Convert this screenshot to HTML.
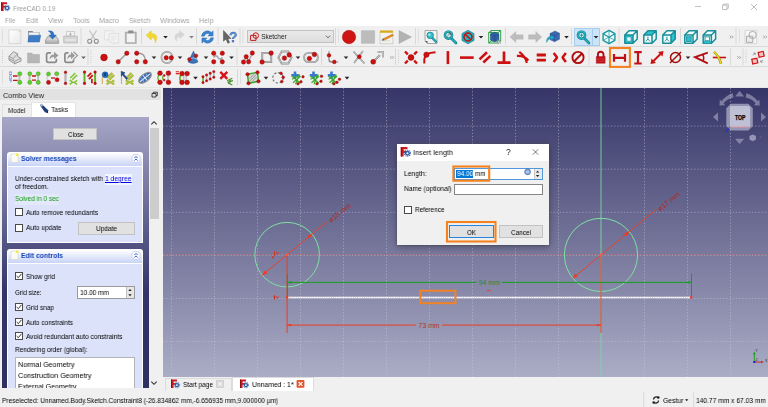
<!DOCTYPE html><html><head><meta charset="utf-8"><title>FreeCAD 0.19</title><style>
*{box-sizing:border-box;margin:0;padding:0}
html,body{width:768px;height:407px;overflow:hidden;background:#f0f0f0;font-family:"Liberation Sans",sans-serif;font-size:7.5px;color:#000}
.abs{position:absolute}
.t{position:absolute;white-space:nowrap;will-change:transform}
#titlebar{left:0;top:0;width:768px;height:26px;background:#fff}
#view{left:163px;top:88px;width:605px;height:288.5px;background:linear-gradient(#353568,#abacc5);overflow:hidden}
.btn{position:absolute;background:#e1e1e1;border:0.8px solid #c2c2c2}
.cb{position:absolute;width:8px;height:8px;background:#fff;border:0.7px solid #4a4a4a}
.grp{position:absolute;left:7px;width:135.5px;border:1px solid #fff;background:#dbe2fa}
.gh{position:absolute;left:7px;width:135.5px;height:14.5px;border:1px solid #fff;border-bottom:none;border-radius:3px 3px 0 0;background:linear-gradient(#fff,#c8d3f6)}
svg{position:absolute;overflow:visible}
</style></head><body>
<div id="titlebar" class="abs"></div>
<svg class="abs" style="left:0;top:0" width="768" height="26" viewBox="0 0 768 26">
<g transform="translate(1.00,2.20) scale(0.870)"><path d="M0 0H7V2.4H3V4H5.6V6.2H3V10H0Z" fill="#cb1a1f"/><path d="M0 0H1.3V10H0Z" fill="#8e1014"/><circle cx="7" cy="6.6" r="2.6" fill="#2f5fa8"/><circle cx="7" cy="6.6" r="3.2" fill="none" stroke="#2f5fa8" stroke-width="1.1" stroke-dasharray="1.1 0.9"/><circle cx="7" cy="6.6" r="1.1" fill="#fff"/></g>
<path d="M695 6.5H701" stroke="#b0b0b0" stroke-width="0.8" fill="none"/>
<path d="M722.5 5.2H727V9.5H722.5ZM723.8 5.2V4H728.3V8.3H727" stroke="#b0b0b0" stroke-width="0.8" fill="none"/>
<path d="M751 4L757 10M757 4L751 10" stroke="#b0b0b0" stroke-width="0.8" fill="none"/>
</svg>
<div class="t" style="left:13.00px;top:2.50px;font-size:8.00px;line-height:11.00px;color:#9c9c9c;transform:scaleX(0.8273);transform-origin:0 50%;">FreeCAD 0.19</div>
<div class="t" style="left:4.70px;top:15.60px;font-size:7.60px;line-height:10.60px;color:#a2a2a2;transform:scaleX(0.8574);transform-origin:0 50%;">File</div>
<div class="t" style="left:25.80px;top:15.60px;font-size:7.60px;line-height:10.60px;color:#a2a2a2;transform:scaleX(0.9163);transform-origin:0 50%;">Edit</div>
<div class="t" style="left:47.50px;top:15.60px;font-size:7.60px;line-height:10.60px;color:#a2a2a2;transform:scaleX(0.9182);transform-origin:0 50%;">View</div>
<div class="t" style="left:72.80px;top:15.60px;font-size:7.60px;line-height:10.60px;color:#a2a2a2;transform:scaleX(0.9300);transform-origin:0 50%;">Tools</div>
<div class="t" style="left:99.30px;top:15.60px;font-size:7.60px;line-height:10.60px;color:#a2a2a2;transform:scaleX(0.9472);transform-origin:0 50%;">Macro</div>
<div class="t" style="left:128.80px;top:15.60px;font-size:7.60px;line-height:10.60px;color:#a2a2a2;transform:scaleX(0.9254);transform-origin:0 50%;">Sketch</div>
<div class="t" style="left:159.50px;top:15.60px;font-size:7.60px;line-height:10.60px;color:#a2a2a2;transform:scaleX(0.9569);transform-origin:0 50%;">Windows</div>
<div class="t" style="left:198.50px;top:15.60px;font-size:7.60px;line-height:10.60px;color:#a2a2a2;transform:scaleX(0.9277);transform-origin:0 50%;">Help</div>
<div class="abs" style="left:0;top:26px;width:768px;height:62px;background:#f0f0f0"></div>
<div class="abs" style="left:0;top:45.6px;width:768px;height:0.8px;background:#dadada"></div>
<div class="abs" style="left:0;top:66.1px;width:768px;height:0.8px;background:#dadada"></div>
<div class="abs" style="left:0;top:87.2px;width:768px;height:0.8px;background:#e6e6e6"></div>
<div class="abs" style="left:247px;top:30.3px;width:86.5px;height:12.6px;background:linear-gradient(#e9e9e9,#dedede);border:0.8px solid #c2c2c2"></div>
<div class="abs" style="left:574px;top:28px;width:25.5px;height:17.5px;background:#cce4f7;border:0.8px solid #a6cdee"></div>
<div class="abs" style="left:591.5px;top:28px;width:0.8px;height:17.5px;background:#a6cdee"></div>
<svg class="abs" style="left:0;top:0" width="768" height="88" viewBox="0 0 768 88">
<path d="M81.0 28.0V44.5" stroke="#d2d2d2" stroke-width="0.8"/>
<path d="M141.5 28.0V44.5" stroke="#d2d2d2" stroke-width="0.8"/>
<path d="M196.5 28.0V44.5" stroke="#d2d2d2" stroke-width="0.8"/>
<path d="M218.0 28.0V44.5" stroke="#d2d2d2" stroke-width="0.8"/>
<path d="M240.0 28.0V44.5" stroke="#d2d2d2" stroke-width="0.8"/>
<path d="M335.5 28.0V44.5" stroke="#d2d2d2" stroke-width="0.8"/>
<path d="M415.5 28.0V44.5" stroke="#d2d2d2" stroke-width="0.8"/>
<path d="M505.5 28.0V44.5" stroke="#d2d2d2" stroke-width="0.8"/>
<path d="M571.5 28.0V44.5" stroke="#d2d2d2" stroke-width="0.8"/>
<path d="M619.0 28.0V44.5" stroke="#d2d2d2" stroke-width="0.8"/>
<path d="M680.5 28.0V44.5" stroke="#d2d2d2" stroke-width="0.8"/>
<path d="M736.0 28.0V44.5" stroke="#d2d2d2" stroke-width="0.8"/>
<path d="M2.5 29.5V43.5" stroke="#b8b8b8" stroke-width="0.8" stroke-dasharray="0.8 1.2"/>
<path d="M243.0 29.5V43.5" stroke="#b8b8b8" stroke-width="0.8" stroke-dasharray="0.8 1.2"/>
<path d="M338.5 29.5V43.5" stroke="#b8b8b8" stroke-width="0.8" stroke-dasharray="0.8 1.2"/>
<path d="M418.5 29.5V43.5" stroke="#b8b8b8" stroke-width="0.8" stroke-dasharray="0.8 1.2"/>
<path d="M739.5 29.5V43.5" stroke="#b8b8b8" stroke-width="0.8" stroke-dasharray="0.8 1.2"/>
<path d="M88.0 48.5V65.0" stroke="#d2d2d2" stroke-width="0.8"/>
<path d="M237.0 48.5V65.0" stroke="#d2d2d2" stroke-width="0.8"/>
<path d="M321.5 48.5V65.0" stroke="#d2d2d2" stroke-width="0.8"/>
<path d="M395.5 48.5V65.0" stroke="#d2d2d2" stroke-width="0.8"/>
<path d="M589.0 48.5V65.0" stroke="#d2d2d2" stroke-width="0.8"/>
<path d="M730.5 48.5V65.0" stroke="#d2d2d2" stroke-width="0.8"/>
<path d="M743.0 48.5V65.0" stroke="#d2d2d2" stroke-width="0.8"/>
<path d="M2.5 50.0V64.0" stroke="#b8b8b8" stroke-width="0.8" stroke-dasharray="0.8 1.2"/>
<path d="M91.0 50.0V64.0" stroke="#b8b8b8" stroke-width="0.8" stroke-dasharray="0.8 1.2"/>
<path d="M398.5 50.0V64.0" stroke="#b8b8b8" stroke-width="0.8" stroke-dasharray="0.8 1.2"/>
<path d="M746.0 50.0V64.0" stroke="#b8b8b8" stroke-width="0.8" stroke-dasharray="0.8 1.2"/>
<path d="M237.5 69.0V85.5" stroke="#d2d2d2" stroke-width="0.8"/>
<path d="M2.5 70.5V84.5" stroke="#b8b8b8" stroke-width="0.8" stroke-dasharray="0.8 1.2"/>
<path d="M240.5 70.5V84.5" stroke="#b8b8b8" stroke-width="0.8" stroke-dasharray="0.8 1.2"/>
<path d="M163.2 36.0h4.6l-2.3 2.6Z" fill="#222"/>
<path d="M478.7 36.0h4.6l-2.3 2.6Z" fill="#222"/>
<path d="M564.2 36.0h4.6l-2.3 2.6Z" fill="#222"/>
<path d="M593.7 36.0h4.6l-2.3 2.6Z" fill="#222"/>
<path d="M189.2 36.0h4.6l-2.3 2.6Z" fill="#808088"/>
<path d="M151.7 56.5h4.6l-2.3 2.6Z" fill="#222"/>
<path d="M177.7 56.5h4.6l-2.3 2.6Z" fill="#222"/>
<path d="M203.7 56.5h4.6l-2.3 2.6Z" fill="#222"/>
<path d="M229.2 56.5h4.6l-2.3 2.6Z" fill="#222"/>
<path d="M295.7 56.5h4.6l-2.3 2.6Z" fill="#222"/>
<path d="M343.7 56.5h4.6l-2.3 2.6Z" fill="#222"/>
<path d="M685.7 56.5h4.6l-2.3 2.6Z" fill="#222"/>
<path d="M81.2 56.5h4.6l-2.3 2.6Z" fill="#666"/>
<path d="M193.2 76.8h4.6l-2.3 2.6Z" fill="#222"/>
<path d="M263.7 76.8h4.6l-2.3 2.6Z" fill="#222"/>
<path d="M344.7 76.8h4.6l-2.3 2.6Z" fill="#222"/>
<path d="M729.8 35.6l1.3 1.4l-1.3 1.4M731.9 35.6l1.3 1.4l-1.3 1.4" stroke="#777" stroke-width="0.6" fill="none"/>
<path d="M763.3 35.6l1.3 1.4l-1.3 1.4M765.4 35.6l1.3 1.4l-1.3 1.4" stroke="#777" stroke-width="0.6" fill="none"/>
<path d="M390.3 56.1l1.3 1.4l-1.3 1.4M392.4 56.1l1.3 1.4l-1.3 1.4" stroke="#777" stroke-width="0.6" fill="none"/>
<path d="M737.3 56.1l1.3 1.4l-1.3 1.4M739.4 56.1l1.3 1.4l-1.3 1.4" stroke="#777" stroke-width="0.6" fill="none"/>
<path d="M250.6 35.4H256V40.4H250.6Z" fill="none" stroke="#c41a1a" stroke-width="1"/><circle cx="255.8" cy="35.6" r="2.8" fill="none" stroke="#c41a1a" stroke-width="1"/>
<path d="M325.9 35.7L328 37.8L330.1 35.7" stroke="#444" stroke-width="0.8" fill="none"/>
<text x="261.2" y="39.2" font-size="7.5" fill="#222" font-family="Liberation Sans, sans-serif" textLength="25.5" lengthAdjust="spacingAndGlyphs">Sketcher</text>
<g transform="translate(15.50,37.00)"><defs><linearGradient id="gnew" x1="0" y1="0" x2="1" y2="1"><stop offset="0" stop-color="#ffffff"/><stop offset="1" stop-color="#e9e9e9"/></linearGradient></defs><path d="M-6.6 -7H5.4V6.6H-6.6Z" fill="url(#gnew)" stroke="#cfcfcf" stroke-width="0.7" /><path d="M3 -7H5.4V-4.6H3Z" fill="#dcdcdc" /></g>
<g transform="translate(34.00,36.10)"><path d="M-6 -5H-1.5L-.5 -3.8H5.5V5.5H-6Z" fill="#7d8a9c" /><path d="M-5.2 -3.6H4.8V1H-5.2Z" fill="#f2f2f2" /><path d="M-4.8 -.8H6.8L5.4 6H-6.2Z" fill="#3d7dc8" stroke="#2a5fa0" stroke-width="0.4" /></g>
<g transform="translate(52.00,36.40)"><path d="M-4.5 0.3H4.5L6.6 4V7H-6.6V4Z" fill="#d2d2d2" stroke="#7c7c7c" stroke-width="0.6" /><path d="M-6.2 4.2H6.2V6.6H-6.2Z" fill="#a8a8a8" /><path d="M-5 5.4H5" fill="none" stroke="#e6e6e6" stroke-width="0.5" /><path d="M-3.8 -5.5Q1.8 -6.2 2 -1.5H4.4L.6 2.8L-3.2 -1.5H-.8Q-.8 -4 -3.8 -5.5Z" fill="#2f73c4" stroke="#1d4f94" stroke-width="0.3" /></g>
<g transform="translate(70.50,37.00)"><path d="M-4 -5.5H4V-1H-4Z" fill="#f4f4f4" stroke="#a8a8a8" stroke-width="0.5" /><path d="M-6.8 -0.8H6.8V6H-6.8Z" fill="#d6d6d6" stroke="#9c9c9c" stroke-width="0.5" /><path d="M-5 3H5" fill="none" stroke="#f0f0f0" stroke-width="1" /><path d="M0 -4.6V-2M-1.3 -3.2L0 -1.9L1.3 -3.2" fill="none" stroke="#888" stroke-width="0.6" /></g>
<g transform="translate(93.00,37.00)"><path d="M-3.5 -6.5L1.8 2.2M3.5 -6.5L-1.8 2.2" fill="none" stroke="#c4c4c4" stroke-width="1.3" /><circle cx="-3.3" cy="4.3" r="2" fill="none" stroke="#8e8e8e" stroke-width="1.1"/><circle cx="3.3" cy="4.3" r="2" fill="none" stroke="#8e8e8e" stroke-width="1.1"/></g>
<g transform="translate(111.00,37.00)"><path d="M-6.4 -6.4H2.6V2.8H-6.4Z" fill="#f3f3f3" stroke="#d8d8d8" stroke-width="0.6" /><path d="M-2 -3.4H7.6V6H1L-2 3.4Z" fill="#f3f3f3" stroke="#d2d2d2" stroke-width="0.6" /><path d="M0 -.6H5.6M0 1.2H5.6M0 3H4" fill="none" stroke="#dcdcdc" stroke-width="0.6" /></g>
<g transform="translate(130.80,37.00)"><path d="M-5.5 -5H5.5V6.5H-5.5Z" fill="#b4b4b4" stroke="#9a9a9a" stroke-width="0.5" /><path d="M-4 -3.5H4V5.2H-4Z" fill="#f4f4f4" /><path d="M-2.5 -6.5H2.5V-3.8H-2.5Z" fill="#8c8c8c" /></g>
<g transform="translate(152.20,37.00)"><path d="M-6 -1.8L-1 -6.2V-3.6C4.5 -3.6 6 .5 3 5.8C3 2 1.5 .2 -1 .4V3Z" fill="#f2d82c" stroke="#d8bc18" stroke-width="0.4" /></g>
<g transform="translate(179.00,36.10)"><g transform="scale(0.88)"><path d="M6 -1.8L1 -6.2V-3.6C-4.5 -3.6 -6 .5 -3 5.8C-3 2 -1.5 .2 1 .4V3Z" fill="#d6d6d6" stroke="#c8c8c8" stroke-width="0.4" /></g></g>
<g transform="translate(207.50,37.00)"><path d="M-6 -.8A6 6 0 0 1 4 -4.6L5.6 -6.2V-1H.4L2.2 -2.8A3.4 3.4 0 0 0 -3.2 -.8ZM6 .8A6 6 0 0 1 -4 4.6L-5.6 6.2V1H-.4L-2.2 2.8A3.4 3.4 0 0 0 3.2 .8Z" fill="#3b82d0" stroke="#245fa8" stroke-width="0.4" /></g>
<g transform="translate(229.00,37.00)"><path d="M-5.5 -6.5V4.2L-3 2L-1.2 6.2L.6 5.4L-1.2 1.5H2Z" fill="#666" stroke="#333" stroke-width="0.4" /><text x="0" y="4.6" font-size="14" font-weight="bold" fill="#5a90d0" stroke="#2a5a9c" stroke-width="0.3" font-family="Liberation Sans, sans-serif">?</text></g>
<g transform="translate(349.00,37.00)"><circle cx="0" cy="0" r="6.7" fill="#d01414" stroke="#a80c0c" stroke-width="0.5"/></g>
<g transform="translate(368.00,37.00)"><path d="M-6.7 -6.4H6.7V6.4H-6.7Z" fill="#bcbcbc" stroke="#adadad" stroke-width="0.4" /></g>
<g transform="translate(386.70,37.00)"><g transform="scale(1.12)"><path d="M-6 -5H5.5V6H-6Z" fill="#f2f2ee" stroke="#b8b8b0" stroke-width="0.5" /><path d="M-6 -5.8H5.5V-3.8H-6Z" fill="#d8a818" /><path d="M-4.5 1.5H1M-4.5 3.5H3" fill="none" stroke="#c4c4c4" stroke-width="0.5" /><path d="M-3.2 1.6L5.2 -2.6L6 -1.2L-2.4 3Z" fill="#e48a2a" stroke="#b86010" stroke-width="0.3" /><path d="M-3.2 1.6L-4.6 3.2L-2.4 3Z" fill="#333" /></g></g>
<g transform="translate(405.00,37.00)"><path d="M-6 -6.5L6.5 0L-6 6.5Z" fill="#b2b2b2" stroke="#a0a0a0" stroke-width="0.4" /></g>
<g transform="translate(431.00,37.00)"><path d="M-6 -6.5H6V6.5H-3.5L-6 4Z" fill="#f2f2f2" stroke="#777" stroke-width="0.6" /><path d="M-6 4H-3.5V6.5Z" fill="#555" /><path d="M0 -.5L5 4.8" fill="none" stroke="#0b6f7a" stroke-width="2.2" stroke-linecap="round"/><path d="M0 -.5L5 4.8" fill="none" stroke="#22b4c2" stroke-width="1.3" stroke-linecap="round"/><circle cx="-.8" cy="-1.6" r="3.3" fill="#35c0cc" stroke="#0b6f7a" stroke-width="0.6"/><circle cx="-1.6" cy="-2.4" r="1.2" fill="#a8eaf0"/></g>
<g transform="translate(450.00,37.00)"><g transform="translate(0,0)"><path d="M1.5 1.5L6 6" fill="none" stroke="#0b6f7a" stroke-width="2.6" stroke-linecap="round"/><path d="M1.5 1.5L6 6" fill="none" stroke="#22b4c2" stroke-width="1.6" stroke-linecap="round"/><circle cx="-1.5" cy="-1.8" r="3.6" fill="#cfeef2" stroke="#0b6f7a" stroke-width="2.4"/><circle cx="-1.5" cy="-1.8" r="3.6" fill="none" stroke="#22b4c2" stroke-width="1.5"/></g><path d="M-3.3 -.2L.4 -3.8M.4 -3.8H-1.6M.4 -3.8V-1.8" fill="none" stroke="#555" stroke-width="0.7" /></g>
<g transform="translate(468.00,37.00)"><path d="M0 -6.8L6 -3.4V3.4L0 6.8L-6 3.4V-3.4Z" fill="#22b4c2" stroke="#0b6f7a" stroke-width="0.6" /><circle cx="0" cy="0" r="4" fill="none" stroke="#c01010" stroke-width="1.5"/><path d="M-2.8 -2.8L2.8 2.8" fill="none" stroke="#c01010" stroke-width="1.5" /></g>
<g transform="translate(494.70,37.00)"><path d="M-6 -4.5H3.5V6H-6ZM-3.5 -6.5H6V4H-3.5ZM-6 -4.5L-3.5 -6.5M3.5 -4.5L6 -6.5M3.5 6L6 4M-6 6L-3.5 4" fill="none" stroke="#1c9a3c" stroke-width="0.9" /><path d="M-4.2 -3L0 -4.8L4.2 -3V3L0 4.8L-4.2 3Z" fill="#2f5fa4" stroke="#1a3c78" stroke-width="0.4" /><path d="M-4.2 -3L0 -1.2L4.2 -3M0 -1.2V4.8" fill="none" stroke="#1a3c78" stroke-width="0.4" /><path d="M2.5 2L6.3 6.2L4.6 6.2L3.8 7Z" fill="#ddd" stroke="#555" stroke-width="0.3" /></g>
<g transform="translate(516.70,37.00)"><path d="M-6.8 0L-.8 -5.6V-2.2H6.5V2.2H-.8V5.6Z" fill="#bdbdbd" stroke="#acacac" stroke-width="0.3" /></g>
<g transform="translate(535.00,37.00)"><path d="M6.8 0L.8 -5.6V-2.2H-6.5V2.2H.8V5.6Z" fill="#bdbdbd" stroke="#acacac" stroke-width="0.3" /></g>
<g transform="translate(553.00,37.00)"><path d="M-3 -3.5L2 -6L6.5 -3.8V2.2L1.5 4.8L-3 2.6Z" fill="#3a68b0" stroke="#1f4488" stroke-width="0.4" /><path d="M-3 -3.5L1.5 -1.3L6.5 -3.8M1.5 -1.3V4.8" fill="none" stroke="#1f4488" stroke-width="0.4" /><path d="M-6.5 3.5Q-6 -.5 -2 -.6V-2.2L1.5 .6L-2 3.2V1.6Q-4.5 1.6 -6.5 5.5Z" fill="#22a8c4" stroke="#0f7088" stroke-width="0.3" /></g>
<g transform="translate(583.00,37.00)"><g transform="translate(0,0)"><path d="M1.5 1.5L6 6" fill="none" stroke="#0b6f7a" stroke-width="2.6" stroke-linecap="round"/><path d="M1.5 1.5L6 6" fill="none" stroke="#22b4c2" stroke-width="1.6" stroke-linecap="round"/><circle cx="-1.5" cy="-1.8" r="3.6" fill="#cfeef2" stroke="#0b6f7a" stroke-width="2.4"/><circle cx="-1.5" cy="-1.8" r="3.6" fill="none" stroke="#22b4c2" stroke-width="1.5"/></g><path d="M-3.2 -1.8H.2M-1.5 -3.5V-.1" fill="none" stroke="#0b6f7a" stroke-width="0.7" /></g>
<g transform="translate(609.00,37.00)"><path d="M0 -6.6L5.9 -3.3V3.3L0 6.6L-5.9 3.3V-3.3Z" fill="#f4fdfd" stroke="#1a96a2" stroke-width="1.4" stroke-linejoin="round"/><path d="M0 .2V6.6M0 .2L-5.9 -3.3M0 .2L5.9 -3.3" fill="none" stroke="#1a96a2" stroke-width="1.2" /><path d="M0 .2V-6.6M0 .2L-5.9 3.3M0 .2L5.9 3.3" fill="none" stroke="#1a96a2" stroke-width="0.7" /></g>
<g transform="translate(631.00,37.00)"><path d="M-6.2 -2H2V6.2H-6.2Z" fill="#2cc4d0" /><path d="M-6.2 -2L-2 -6.2H6.2L2 -2Z" fill="#f2fcfd" /><path d="M2 -2L6.2 -6.2V2L2 6.2Z" fill="#f2fcfd" /><path d="M-6.2 -2H2V6.2H-6.2ZM-6.2 -2L-2 -6.2H6.2L2 -2ZM2 -2L6.2 -6.2V2L2 6.2Z" fill="none" stroke="#178e9a" stroke-width="1.5" stroke-linejoin="round"/><path d="M-4.2 0H0V4.2H-4.2Z" fill="#eafafc" stroke="#178e9a" stroke-width="0.6" /></g>
<g transform="translate(650.00,37.00)"><path d="M-6.2 -2H2V6.2H-6.2Z" fill="#f2fcfd" /><path d="M-6.2 -2L-2 -6.2H6.2L2 -2Z" fill="#2cc4d0" /><path d="M2 -2L6.2 -6.2V2L2 6.2Z" fill="#f2fcfd" /><path d="M-6.2 -2H2V6.2H-6.2ZM-6.2 -2L-2 -6.2H6.2L2 -2ZM2 -2L6.2 -6.2V2L2 6.2Z" fill="none" stroke="#178e9a" stroke-width="1.5" stroke-linejoin="round"/><path d="M-2.1 2V-.4M-2.1 2L-4.2 4.4M-2.1 2L0 4.4" fill="none" stroke="#178e9a" stroke-width="0.9" /></g>
<g transform="translate(669.00,37.00)"><path d="M-6.2 -2H2V6.2H-6.2Z" fill="#f2fcfd" /><path d="M-6.2 -2L-2 -6.2H6.2L2 -2Z" fill="#f2fcfd" /><path d="M2 -2L6.2 -6.2V2L2 6.2Z" fill="#2cc4d0" /><path d="M-6.2 -2H2V6.2H-6.2ZM-6.2 -2L-2 -6.2H6.2L2 -2ZM2 -2L6.2 -6.2V2L2 6.2Z" fill="none" stroke="#178e9a" stroke-width="1.5" stroke-linejoin="round"/><path d="M-2.1 2V-.4M-2.1 2L-4.2 4.4M-2.1 2L0 4.4" fill="none" stroke="#178e9a" stroke-width="0.9" /></g>
<g transform="translate(691.00,37.00)"><path d="M-6.2 -2H2V6.2H-6.2Z" fill="#f2fcfd" /><path d="M-6.2 -2L-2 -6.2H6.2L2 -2Z" fill="#f2fcfd" /><path d="M2 -2L6.2 -6.2V2L2 6.2Z" fill="#f2fcfd" /><path d="M-6.2 -2H2V6.2H-6.2ZM-6.2 -2L-2 -6.2H6.2L2 -2ZM2 -2L6.2 -6.2V2L2 6.2Z" fill="none" stroke="#178e9a" stroke-width="1.5" stroke-linejoin="round"/><path d="M-4.4 -.2H.2V4.4H-4.4Z" fill="#2cc4d0" stroke="#178e9a" stroke-width="0.9" /><path d="M-6.2 -2L-4.4 -.2M2 -2L.2 -.2M2 6.2L.2 4.4M-6.2 6.2L-4.4 4.4" fill="none" stroke="#178e9a" stroke-width="0.8" /></g>
<g transform="translate(709.40,37.00)"><path d="M-6.2 -2H2V6.2H-6.2Z" fill="#f2fcfd" /><path d="M-6.2 -2L-2 -6.2H6.2L2 -2Z" fill="#f2fcfd" /><path d="M2 -2L6.2 -6.2V2L2 6.2Z" fill="#f2fcfd" /><path d="M-6.2 -2H2V6.2H-6.2ZM-6.2 -2L-2 -6.2H6.2L2 -2ZM2 -2L6.2 -6.2V2L2 6.2Z" fill="none" stroke="#178e9a" stroke-width="1.5" stroke-linejoin="round"/><path d="M-6.2 6.2L-4.4 3.8H.2L2 6.2Z" fill="#2cc4d0" /><path d="M-4.4 -.2H.2V3.8H-4.4Z" fill="none" stroke="#178e9a" stroke-width="0.9" /><path d="M-6.2 -2L-4.4 -.2M2 -2L.2 -.2M2 6.2L.2 3.8M-6.2 6.2L-4.4 3.8" fill="none" stroke="#178e9a" stroke-width="0.8" /></g>
<g transform="translate(751.00,37.00)"><path d="M-6 -6.6H5.6V6.6H-6Z" fill="#f6f6f6" stroke="#c4c4c4" stroke-width="0.6" /><path d="M-4.5 -.8H1.8V5.4H-4.5Z" fill="#ececec" stroke="#9c9c9c" stroke-width="0.8" /><circle cx="1.6" cy="-2" r="3.6" fill="none" stroke="#9c9c9c" stroke-width="0.8"/></g>
<g transform="translate(15.00,57.50)"><path d="M-6 -1.2L-1.6 -5.8L2.6 -3.8V-1L6 .8V3.6L-.4 6.2L-6 2.6Z" fill="#dedede" stroke="#8c8c8c" stroke-width="0.9" stroke-linejoin="round"/><path d="M-6 -1.2L-1.8 1L2.6 -3.8M-1.8 1V3.2L-.4 3.8L6 .8M-.4 3.8V6.2M-1.8 3.2L-6 1" fill="none" stroke="#8c8c8c" stroke-width="0.7" /></g>
<g transform="translate(33.50,57.50)"><path d="M-6 -4.5H-1.5L-.5 -3H6V5.5H-6Z" fill="#b6b6b6" stroke="#a2a2a2" stroke-width="0.4" /></g>
<g transform="translate(52.00,57.00)"><path d="M-1 -4.2H-3.6Q-5.4 -4.2 -5.4 -2.4V3.6Q-5.4 5.4 -3.6 5.4H2.6Q4.4 5.4 4.4 3.6V1.8" fill="none" stroke="#8a8a8a" stroke-width="1.7" /><path d="M-2.5 2.5Q-2.5 -2.5 2 -2.6V-5.2L6.5 -1.4L2 2.2V-.2Q-.8 -.2 -2.5 2.5Z" fill="#9a9a9a" /></g>
<g transform="translate(70.50,57.00)"><path d="M-2 -4.2H-3.8Q-5.6 -4.2 -5.6 -2.4V3.6Q-5.6 5.4 -3.8 5.4H1.2Q3 5.4 3 3.6V2.6" fill="none" stroke="#8a8a8a" stroke-width="1.7" /><path d="M-3.2 2.5Q-3.2 -2.5 .5 -2.6V-5.2L4.5 -1.4L.5 2.2V-.2Q-1.8 -.2 -3.2 2.5Z" fill="#9a9a9a" /><path d="M3 -5.2L7 -1.4L3 2.2" fill="none" stroke="#9a9a9a" stroke-width="1.2" /></g>
<g transform="translate(104.00,57.50)"><circle cx="0.00" cy="0.00" r="3.40" fill="#cc0f0f" stroke="#8a0a0a" stroke-width="0.4"/></g>
<g transform="translate(122.50,57.50)"><path d="M-4.5 4.5L4.5 -4.5" fill="none" stroke="#9a9a9a" stroke-width="1.4" /><circle cx="-4.30" cy="4.30" r="2.20" fill="#cc0f0f" stroke="#8a0a0a" stroke-width="0.4"/><circle cx="4.30" cy="-4.30" r="2.20" fill="#cc0f0f" stroke="#8a0a0a" stroke-width="0.4"/></g>
<g transform="translate(141.00,57.50)"><path d="M-4 -4.5Q4.5 -4.5 4.5 4" fill="none" stroke="#9a9a9a" stroke-width="1.4" /><circle cx="-4.30" cy="-4.30" r="2.20" fill="#cc0f0f" stroke="#8a0a0a" stroke-width="0.4"/><circle cx="-4.30" cy="4.30" r="2.20" fill="#cc0f0f" stroke="#8a0a0a" stroke-width="0.4"/><circle cx="4.30" cy="4.30" r="2.20" fill="#cc0f0f" stroke="#8a0a0a" stroke-width="0.4"/></g>
<g transform="translate(167.00,57.50)"><circle cx="0" cy="0" r="5.6" fill="none" stroke="#8a8a8a" stroke-width="1.6"/><circle cx="0" cy="0" r="5.6" fill="none" stroke="#e0e0e0" stroke-width="0.6"/><circle cx="-0.80" cy="0.30" r="2.20" fill="#cc0f0f" stroke="#8a0a0a" stroke-width="0.4"/><circle cx="4.30" cy="0.30" r="2.20" fill="#cc0f0f" stroke="#8a0a0a" stroke-width="0.4"/></g>
<g transform="translate(193.00,57.50)"><path d="M0.5 -6.5L5 4.5Q0 7.5 -5 4.5Z" fill="#3d74b8" stroke="#1f4c8a" stroke-width="0.4" /><path d="M-3.2 1.5Q.5 -1 4 1.8" fill="none" stroke="#cfe0f4" stroke-width="0.7" /><circle cx="-3.60" cy="1.80" r="1.80" fill="#cc0f0f" stroke="#8a0a0a" stroke-width="0.4"/><circle cx="3.00" cy="-1.80" r="1.80" fill="#cc0f0f" stroke="#8a0a0a" stroke-width="0.4"/></g>
<g transform="translate(218.00,57.50)"><path d="M-4.3 -4.3L4.3 -4.3M-4.3 4.3L4.3 4.3" fill="none" stroke="none" stroke-width="1" /><path d="M-4.5 0Q-2 -3.5 0 0T4.5 0" fill="none" stroke="#9a9a9a" stroke-width="1.3" /><circle cx="-4.30" cy="-4.30" r="2.20" fill="#cc0f0f" stroke="#8a0a0a" stroke-width="0.4"/><circle cx="4.30" cy="-4.30" r="2.20" fill="#cc0f0f" stroke="#8a0a0a" stroke-width="0.4"/><circle cx="-4.30" cy="4.30" r="2.20" fill="#cc0f0f" stroke="#8a0a0a" stroke-width="0.4"/><circle cx="4.30" cy="4.30" r="2.20" fill="#cc0f0f" stroke="#8a0a0a" stroke-width="0.4"/></g>
<g transform="translate(248.00,57.50)"><path d="M-4.5 4.5L-1.5 -.5L.5 4L4.5 -4.5" fill="none" stroke="#9a9a9a" stroke-width="1.2" /><circle cx="-4.50" cy="4.50" r="2.20" fill="#cc0f0f" stroke="#8a0a0a" stroke-width="0.4"/><circle cx="-1.80" cy="-0.80" r="2.20" fill="#cc0f0f" stroke="#8a0a0a" stroke-width="0.4"/><circle cx="0.60" cy="4.20" r="2.20" fill="#cc0f0f" stroke="#8a0a0a" stroke-width="0.4"/><circle cx="4.30" cy="-4.50" r="2.20" fill="#cc0f0f" stroke="#8a0a0a" stroke-width="0.4"/></g>
<g transform="translate(266.70,57.50)"><path d="M-4.5 -4.5H4.5V4.5H-4.5Z" fill="none" stroke="#8e8e8e" stroke-width="2" /><path d="M-4.5 -4.5H4.5V4.5H-4.5Z" fill="none" stroke="#d8d8d8" stroke-width="0.6" /><circle cx="-4.60" cy="4.50" r="2.30" fill="#cc0f0f" stroke="#8a0a0a" stroke-width="0.4"/><circle cx="4.40" cy="-4.40" r="2.30" fill="#cc0f0f" stroke="#8a0a0a" stroke-width="0.4"/></g>
<g transform="translate(285.00,57.50)"><path d="M-6.6 0L-3.3 -6H3.3L6.6 0L3.3 6H-3.3Z" fill="none" stroke="#8a8a8a" stroke-width="1.9" /><path d="M-6.6 0L-3.3 -6H3.3L6.6 0L3.3 6H-3.3Z" fill="none" stroke="#e4e4e4" stroke-width="0.6" /><circle cx="-0.60" cy="0.60" r="2.30" fill="#cc0f0f" stroke="#8a0a0a" stroke-width="0.4"/><circle cx="4.20" cy="-2.60" r="2.30" fill="#cc0f0f" stroke="#8a0a0a" stroke-width="0.4"/></g>
<g transform="translate(311.00,57.50)"><path d="M-2.3 -4.6H2.3A4.6 4.6 0 0 1 2.3 4.6H-2.3A4.6 4.6 0 0 1 -2.3 -4.6Z" fill="none" stroke="#8a8a8a" stroke-width="1.9" /><path d="M-2.3 -4.6H2.3A4.6 4.6 0 0 1 2.3 4.6H-2.3A4.6 4.6 0 0 1 -2.3 -4.6Z" fill="none" stroke="#e4e4e4" stroke-width="0.6" /><circle cx="-1.60" cy="1.00" r="2.30" fill="#cc0f0f" stroke="#8a0a0a" stroke-width="0.4"/><circle cx="3.40" cy="-3.00" r="2.30" fill="#cc0f0f" stroke="#8a0a0a" stroke-width="0.4"/></g>
<g transform="translate(332.50,57.50)"><path d="M-3.5 -6.5V1.5Q-3.5 4.5 0 4.5H6" fill="none" stroke="#9a9a9a" stroke-width="1.2" /><path d="M-3.5 3L-.5 4.5M-3.5 1V4.5H0" fill="none" stroke="#777" stroke-width="0.5" /><circle cx="-3.50" cy="-2.20" r="1.90" fill="#cc0f0f" stroke="#8a0a0a" stroke-width="0.4"/><circle cx="1.80" cy="4.40" r="1.90" fill="#cc0f0f" stroke="#8a0a0a" stroke-width="0.4"/></g>
<g transform="translate(359.00,57.50)"><path d="M-5.5 -6L5.5 6M4 -6.5L-5 5.5" fill="none" stroke="#8e8e8e" stroke-width="1.8" /><path d="M-5.5 -6L5.5 6M4 -6.5L-5 5.5" fill="none" stroke="#e8e8e8" stroke-width="0.6" /><circle cx="0.30" cy="-0.80" r="2.00" fill="#cc0f0f" stroke="#8a0a0a" stroke-width="0.4"/></g>
<g transform="translate(377.50,57.50)"><path d="M-4 4L2.5 -2.5" fill="none" stroke="#8a8a8a" stroke-width="1.8" /><path d="M-4 4L2.5 -2.5" fill="none" stroke="#e4e4e4" stroke-width="0.6" /><path d="M0 -5.5H5.5V0" fill="none" stroke="#a0a0a0" stroke-width="2" /><path d="M0 -5.5H5.5V0" fill="none" stroke="#e4e4e4" stroke-width="0.6" /><circle cx="-4.30" cy="4.30" r="2.50" fill="#cc0f0f" stroke="#8a0a0a" stroke-width="0.4"/></g>
<g transform="translate(411.00,57.50)"><path d="M-6 -6L-3.2 -3.2M6 -6L3.2 -3.2M-6 6L-3.2 3.2M6 6L3.2 3.2" fill="none" stroke="#cc0f0f" stroke-width="2.4" /><circle cx="0.00" cy="0.00" r="3.00" fill="#cc0f0f" stroke="#8a0a0a" stroke-width="0.4"/></g>
<g transform="translate(429.00,57.50)"><path d="M-4.7 6V2Q-4.7 -4.6 6.5 -5.2" fill="none" stroke="#cc0f0f" stroke-width="2" /><circle cx="-2.60" cy="-2.80" r="2.70" fill="#cc0f0f" stroke="#8a0a0a" stroke-width="0.4"/></g>
<g transform="translate(447.50,57.50)"><path d="M0.4 -6.4V6.6" fill="none" stroke="#cc0f0f" stroke-width="2.6" /></g>
<g transform="translate(466.70,57.50)"><path d="M-6.7 0.1H7" fill="none" stroke="#cc0f0f" stroke-width="2.6" /></g>
<g transform="translate(485.00,57.50)"><path d="M-5.5 1.9L2 -5.3M-1.7 5L5.4 -1.6" fill="none" stroke="#cc0f0f" stroke-width="2.6" /></g>
<g transform="translate(504.00,57.50)"><path d="M0 -6V5M-6.5 5.2H6.5" fill="none" stroke="#cc0f0f" stroke-width="2.7" /></g>
<g transform="translate(522.50,57.50)"><path d="M-5.6 -1.6Q1.5 -2.2 5.8 3" fill="none" stroke="#cc0f0f" stroke-width="2.3" /><path d="M-3.2 -5.6Q2.8 -1 4.4 5.4" fill="none" stroke="#cc0f0f" stroke-width="2.1" /></g>
<g transform="translate(541.00,57.50)"><path d="M-4.3 -2.5H4.9M-4.3 2.7H4.9" fill="none" stroke="#cc0f0f" stroke-width="2.8" /></g>
<g transform="translate(559.70,57.50)"><path d="M-6 -4.4L-2.6 0L-6 4.6M6.2 -4.4L2.8 0L6.2 4.6" fill="none" stroke="#cc0f0f" stroke-width="2.5" stroke-linejoin="bevel"/></g>
<g transform="translate(578.00,57.50)"><circle cx="0" cy="0" r="5.6" fill="none" stroke="#b00c0c" stroke-width="1.9"/><path d="M-4 4L4 -4" fill="none" stroke="#b00c0c" stroke-width="1.9" /></g>
<g transform="translate(600.70,57.50)"><path d="M-2.8 -.5V-3A2.8 2.8 0 0 1 2.8 -3V-.5" fill="none" stroke="#b80c14" stroke-width="1.9" /><path d="M-4.5 -1H4.5V5.8H-4.5Z" fill="#c01018" stroke="#8a0a0a" stroke-width="0.3" /><path d="M-4.8 1.5H4.8M-4.8 3.7H4.8" fill="none" stroke="#e86a6a" stroke-width="0.4" /></g>
<g transform="translate(619.50,57.50)"><path d="M-5.5 -3.4V4.2M5.5 -3.4V4.2M-5.5 0.4H5.5" fill="none" stroke="#bc1016" stroke-width="2.2" /></g>
<g transform="translate(638.00,57.50)"><path d="M-3.7 -5.4H3.7M-3.7 6H3.7M0 -5.6V6" fill="none" stroke="#c01018" stroke-width="2.2" /></g>
<g transform="translate(657.00,57.50)"><path d="M-3.5 3.5L3.5 -3.5" fill="none" stroke="#cc0f0f" stroke-width="2" /><path d="M6.5 -6.5L5.5 -1L1 -5.5ZM-6.5 6.5L-5.5 1L-1 5.5Z" fill="#cc0f0f" /></g>
<g transform="translate(675.50,57.50)"><circle cx="0" cy="0" r="5" fill="none" stroke="#a00a0a" stroke-width="1.5"/><path d="M-5.5 5.5L5.5 -5.5" fill="none" stroke="#a00a0a" stroke-width="1.4" /></g>
<g transform="translate(701.00,57.50)"><path d="M6.8 -4.8L-6 -.3L6.8 5.8" fill="none" stroke="#b40e14" stroke-width="1.9" /><path d="M1.4 -3.4Q3.8 .2 1.8 3.8" fill="none" stroke="#b40e14" stroke-width="1.5" /></g>
<g transform="translate(719.00,57.50)"><path d="M-6.2 0H7" fill="none" stroke="#cc0f0f" stroke-width="1.6" /><path d="M-5 -5.6Q0 -1.5 2 6.2" fill="none" stroke="#8a7a10" stroke-width="2.4" /><path d="M-5 -5.6Q0 -1.5 2 6.2" fill="none" stroke="#e8d820" stroke-width="1.5" /></g>
<g transform="translate(758.00,57.50)"><g transform="translate(3.2,-3.2) rotate(-12)"><path d="M-2.6 -2.4H2.6V2.4H-2.6Z" fill="#f4c0c0" stroke="#cc1818" stroke-width="1.2" /></g><g transform="translate(-3.2,3.6) rotate(-12)"><path d="M-2.6 -2.4H2.6V2.4H-2.6Z" fill="#f4c0c0" stroke="#cc1818" stroke-width="1.2" /></g><path d="M-5 -2.2L-2.8 -4.4M-2.8 -4.4H-4.6M-2.8 -4.4V-2.6M4.8 2.6L2.8 4.6M2.8 4.6H4.6M2.8 4.6V2.8" fill="none" stroke="#8a8a8a" stroke-width="0.9" /></g>
<g transform="translate(15.00,77.80)"><text transform="translate(-6.3,-6.6) rotate(90)" x="0" y="0" font-size="4.4" fill="#3050d0" font-family="Liberation Sans, sans-serif" textLength="11.5" lengthAdjust="spacingAndGlyphs">DOF</text><path d="M4.4 -3.5V4" fill="none" stroke="#c0c0c0" stroke-width="2" /><path d="M-2 -1.8H2.6M-2 2.6H2.6" fill="none" stroke="#cc0f0f" stroke-width="1.3" /><circle cx="4.80" cy="-4.00" r="2.05" fill="#5fd030" stroke="#2a8a10" stroke-width="0.4"/><circle cx="4.80" cy="4.60" r="2.05" fill="#5fd030" stroke="#2a8a10" stroke-width="0.4"/></g>
<g transform="translate(34.00,77.80)"><path d="M-4.5 -3.5Q-6 0 -4.5 3.5" fill="none" stroke="#c8c8c8" stroke-width="1" /><path d="M-4.2 -3V3.5M4.2 -3V3.5" fill="none" stroke="#c0c0c0" stroke-width="1.8" /><path d="M-2 -1.8H2M-2 2.4H2" fill="none" stroke="#cc0f0f" stroke-width="1.3" /><circle cx="-4.20" cy="-4.00" r="2.05" fill="#5fd030" stroke="#2a8a10" stroke-width="0.4"/><circle cx="4.20" cy="-4.00" r="2.05" fill="#5fd030" stroke="#2a8a10" stroke-width="0.4"/><circle cx="-4.20" cy="4.60" r="2.05" fill="#5fd030" stroke="#2a8a10" stroke-width="0.4"/><circle cx="4.20" cy="4.60" r="2.05" fill="#5fd030" stroke="#2a8a10" stroke-width="0.4"/></g>
<g transform="translate(52.50,77.80)"><path d="M-4.8 -2.5Q-6.2 1 -4.8 4" fill="none" stroke="#c8c8c8" stroke-width="1" /><path d="M-1.5 .2H2.5" fill="none" stroke="#cc0f0f" stroke-width="1.3" /><circle cx="-4.00" cy="-3.80" r="2.05" fill="#5fd030" stroke="#2a8a10" stroke-width="0.4"/><circle cx="4.20" cy="-4.00" r="2.05" fill="#5fd030" stroke="#2a8a10" stroke-width="0.4"/><circle cx="-4.00" cy="4.60" r="2.05" fill="#cc0f0f" stroke="#8a0a0a" stroke-width="0.4"/><circle cx="4.60" cy="2.00" r="2.05" fill="#cc0f0f" stroke="#8a0a0a" stroke-width="0.4"/></g>
<g transform="translate(70.50,77.80)"><path d="M-5 -5.2V5.2" fill="none" stroke="#c4c4c4" stroke-width="2.6" /><path d="M-5 -5.2V5.2" fill="none" stroke="#a8a8a8" stroke-width="0.5" /><path d="M-.3 .2L4.8 -4.8M1.8 1.8L6.6 -2.8" fill="none" stroke="#84c43c" stroke-width="1.7" /><path d="M-.8 2.2L2.2 4.4L-.8 6.6M6.6 2.6L3.8 4.6L6.6 6.6" fill="none" stroke="#84c43c" stroke-width="1.6" /><circle cx="-5.00" cy="-5.60" r="1.30" fill="#cc0f0f" stroke="#8a0a0a" stroke-width="0.4"/><circle cx="-5.00" cy="5.60" r="1.30" fill="#cc0f0f" stroke="#8a0a0a" stroke-width="0.4"/></g>
<g transform="translate(89.50,77.80)"><path d="M-5 -5.5V5.5M5.6 -5.5V5.5" fill="none" stroke="#62b428" stroke-width="2" /><path d="M-2 -1.2L1.8 -5M-.6 1.4L3.2 -2.6M2.4 1V5.4" fill="none" stroke="#cc0f0f" stroke-width="1.7" /><circle cx="-5.00" cy="-5.70" r="1.30" fill="#cc0f0f" stroke="#8a0a0a" stroke-width="0.4"/><circle cx="-5.00" cy="5.60" r="1.30" fill="#cc0f0f" stroke="#8a0a0a" stroke-width="0.4"/><circle cx="5.60" cy="-5.70" r="1.30" fill="#cc0f0f" stroke="#8a0a0a" stroke-width="0.4"/><circle cx="5.60" cy="5.60" r="1.30" fill="#cc0f0f" stroke="#8a0a0a" stroke-width="0.4"/></g>
<g transform="translate(107.50,77.80)"><path d="M-5.2 -.5V6.2" fill="none" stroke="#d8a860" stroke-width="1.1" /><path d="M-.3 .2L4.8 -4.8M1.8 1.8L6.6 -2.8" fill="none" stroke="#d8a050" stroke-width="2.4" /><path d="M-.8 2.2L2.2 4.4L-.8 6.6M6.6 2.6L3.8 4.6L6.6 6.6" fill="none" stroke="#d8a050" stroke-width="2.3" /><path d="M-.3 .2L4.8 -4.8M1.8 1.8L6.6 -2.8" fill="none" stroke="#9ccc3c" stroke-width="1.7" /><path d="M-.8 2.2L2.2 4.4L-.8 6.6M6.6 2.6L3.8 4.6L6.6 6.6" fill="none" stroke="#9ccc3c" stroke-width="1.6" /><circle cx="-2.4" cy="-3" r="3" fill="#1c6cc4" stroke="#0c3c84" stroke-width="0.4"/><path d="M-2.4 -4.8V-1.6" fill="none" stroke="#111" stroke-width="0.9" /></g>
<g transform="translate(126.70,77.80)"><path d="M-5.2 -2V6.2" fill="none" stroke="#d8a860" stroke-width="1.1" /><path d="M-.3 .2L4.8 -4.8M1.8 1.8L6.6 -2.8" fill="none" stroke="#d8a050" stroke-width="2.4" /><path d="M-.8 2.2L2.2 4.4L-.8 6.6M6.6 2.6L3.8 4.6L6.6 6.6" fill="none" stroke="#d8a050" stroke-width="2.3" /><path d="M-.3 .2L4.8 -4.8M1.8 1.8L6.6 -2.8" fill="none" stroke="#9ccc3c" stroke-width="1.7" /><path d="M-.8 2.2L2.2 4.4L-.8 6.6M6.6 2.6L3.8 4.6L6.6 6.6" fill="none" stroke="#9ccc3c" stroke-width="1.6" /><path d="M-5.6 -6.6L-1.6 -5L-3 -3.8L1 .8L-.2 1.8L-4.2 -2.8L-5.4 -1.6Z" fill="#1c4c9c" stroke="#0c2454" stroke-width="0.4" /></g>
<g transform="translate(145.00,77.80)"><g transform="rotate(-38)"><ellipse cx="0" cy="0" rx="7.4" ry="3.7" fill="#3a6cb4" stroke="#8a8a8a" stroke-width="1.2"/><path d="M-6.4 0H6.4M0 -3.3V3.3" stroke="#e4eefc" stroke-width="1" fill="none"/><path d="M-3.5 -2.8Q-2 0 -3.5 2.8M3.5 -2.8Q2 0 3.5 2.8" stroke="#b8d0f0" stroke-width="0.6" fill="none"/></g></g>
<g transform="translate(164.00,77.80)"><path d="M-5.4 -3Q-6.8 0 -5.4 3M-.9 -2Q-1.8 0 -.9 2" fill="none" stroke="#62b428" stroke-width="1.3" /><path d="M4 -3V3" fill="none" stroke="#b8b8b8" stroke-width="1.6" /><circle cx="-4.00" cy="-4.60" r="2.40" fill="#cc0f0f" stroke="#8a0a0a" stroke-width="0.4"/><circle cx="4.40" cy="-4.60" r="2.40" fill="#cc0f0f" stroke="#8a0a0a" stroke-width="0.4"/><circle cx="-4.00" cy="4.50" r="2.40" fill="#cc0f0f" stroke="#8a0a0a" stroke-width="0.4"/><circle cx="4.40" cy="4.50" r="2.40" fill="#cc0f0f" stroke="#8a0a0a" stroke-width="0.4"/><circle cx="0.20" cy="-2.30" r="1.00" fill="#cc0f0f" stroke="#8a0a0a" stroke-width="0.4"/><circle cx="0.20" cy="2.30" r="1.00" fill="#cc0f0f" stroke="#8a0a0a" stroke-width="0.4"/></g>
<g transform="translate(184.00,77.80)"><path d="M-8.2 -6H-5M-8.2 -4.2H-5" fill="none" stroke="#d82020" stroke-width="1.1" /><path d="M-3.4 -2.8Q-5 1 -3.4 3.4" fill="none" stroke="#62b428" stroke-width="1.5" /><path d="M-.2 -3V3.5M2.2 -3V3.5" fill="none" stroke="#bcbcbc" stroke-width="1.3" /><circle cx="-2.00" cy="-4.20" r="2.40" fill="#cc0f0f" stroke="#8a0a0a" stroke-width="0.4"/><circle cx="3.10" cy="-4.20" r="2.40" fill="#cc0f0f" stroke="#8a0a0a" stroke-width="0.4"/><circle cx="-2.00" cy="4.60" r="2.40" fill="#cc0f0f" stroke="#8a0a0a" stroke-width="0.4"/><circle cx="3.10" cy="4.60" r="2.40" fill="#cc0f0f" stroke="#8a0a0a" stroke-width="0.4"/></g>
<g transform="translate(208.00,77.80)"><path d="M-5 -.6V4.6" fill="none" stroke="#62b428" stroke-width="1.6" /><path d="M-1.4 -2.4V2.8M2.2 -4.2V1M5.8 -6V-.8" fill="none" stroke="#c0c0c0" stroke-width="1.7" /><circle cx="-5.00" cy="-1.00" r="1.20" fill="#cc0f0f" stroke="#8a0a0a" stroke-width="0.4"/><circle cx="-5.00" cy="4.80" r="1.20" fill="#cc0f0f" stroke="#8a0a0a" stroke-width="0.4"/><circle cx="-1.40" cy="-2.80" r="1.20" fill="#cc0f0f" stroke="#8a0a0a" stroke-width="0.4"/><circle cx="-1.40" cy="3.00" r="1.20" fill="#cc0f0f" stroke="#8a0a0a" stroke-width="0.4"/><circle cx="2.20" cy="-4.60" r="1.20" fill="#cc0f0f" stroke="#8a0a0a" stroke-width="0.4"/><circle cx="2.20" cy="1.20" r="1.20" fill="#cc0f0f" stroke="#8a0a0a" stroke-width="0.4"/><circle cx="5.80" cy="-6.20" r="1.20" fill="#cc0f0f" stroke="#8a0a0a" stroke-width="0.4"/><circle cx="5.80" cy="-0.60" r="1.20" fill="#cc0f0f" stroke="#8a0a0a" stroke-width="0.4"/></g>
<g transform="translate(226.70,77.80)"><path d="M-6.4 -6L.6 1M.6 -6L-6.4 1" fill="none" stroke="#d41418" stroke-width="2.4" /><path d="M.4 3L5.6 .4M.8 4.6L6.2 2.8M1.4 5.2L5.6 7.2M3.2 2V6.6" fill="none" stroke="#4a8e2a" stroke-width="1.2" /></g>
<g transform="translate(253.00,77.80)"><path d="M-5.5 -3.5L4.5 -5.5L5.5 3.5L-4.5 5.5Z" fill="#d8d8d8" stroke="#3aa828" stroke-width="1.5" /><path d="M-3.5 3.5L3.5 -3.5M-3.5 1L1 -3.5M-1 3.8L3.5 -.8" fill="none" stroke="#888" stroke-width="0.8" /><circle cx="-5.50" cy="-3.50" r="1.70" fill="#cc0f0f" stroke="#8a0a0a" stroke-width="0.4"/><circle cx="4.50" cy="-5.50" r="1.70" fill="#cc0f0f" stroke="#8a0a0a" stroke-width="0.4"/><circle cx="5.50" cy="3.50" r="1.70" fill="#cc0f0f" stroke="#8a0a0a" stroke-width="0.4"/><circle cx="-4.50" cy="5.50" r="1.70" fill="#cc0f0f" stroke="#8a0a0a" stroke-width="0.4"/></g>
<g transform="translate(278.00,77.80)"><circle cx="0" cy="0" r="5.2" fill="none" stroke="#777" stroke-width="1.2" stroke-dasharray="2.2 1.8"/><circle cx="3.00" cy="-4.50" r="1.40" fill="#cc0f0f" stroke="#8a0a0a" stroke-width="0.4"/><circle cx="5.20" cy="-0.50" r="1.40" fill="#cc0f0f" stroke="#8a0a0a" stroke-width="0.4"/><circle cx="3.80" cy="3.80" r="1.40" fill="#cc0f0f" stroke="#8a0a0a" stroke-width="0.4"/></g>
<g transform="translate(297.50,77.80)"><path d="M-2.5 -6.2V1.2M-6.2 -2.6H1.2" fill="none" stroke="#3a78cc" stroke-width="2.6" /><path d="M-5.5 1.5L2.5 -2.5M-4.5 5L3 -1.5M-2 6.5L2 -3.5M-5.5 -1.5L3 5.5" fill="none" stroke="#3aa828" stroke-width="1.2" /><circle cx="5.50" cy="-1.00" r="1.30" fill="#cc0f0f" stroke="#8a0a0a" stroke-width="0.4"/><circle cx="3.50" cy="4.00" r="1.30" fill="#cc0f0f" stroke="#8a0a0a" stroke-width="0.4"/><circle cx="0.50" cy="6.00" r="1.30" fill="#cc0f0f" stroke="#8a0a0a" stroke-width="0.4"/></g>
<g transform="translate(316.00,77.80)"><path d="M-2.5 -6.2V1.2M-6.2 -2.6H1.2" fill="none" stroke="#3a78cc" stroke-width="2.6" /><path d="M-5.5 1.5L2.5 -2.5M-4.5 5L3 -1.5M-2 6.5L2 -3.5M-5.5 -1.5L3 5.5" fill="none" stroke="#3aa828" stroke-width="1.2" /><circle cx="5.50" cy="-1.50" r="1.30" fill="#cc0f0f" stroke="#8a0a0a" stroke-width="0.4"/><circle cx="5.00" cy="3.50" r="1.30" fill="#cc0f0f" stroke="#8a0a0a" stroke-width="0.4"/><circle cx="1.00" cy="6.00" r="1.30" fill="#cc0f0f" stroke="#8a0a0a" stroke-width="0.4"/></g>
<g transform="translate(334.00,77.80)"><path d="M-2.5 -6.2V1.2M-6.2 -2.6H1.2" fill="none" stroke="#3a78cc" stroke-width="2.6" /><path d="M-5.5 1.5L2.5 -2.5M-4.5 5L3 -1.5M-2 6.5L2 -3.5M-5.5 -1.5L3 5.5" fill="none" stroke="#3aa828" stroke-width="1.2" /><circle cx="5.50" cy="1.50" r="1.30" fill="#cc0f0f" stroke="#8a0a0a" stroke-width="0.4"/><circle cx="3.00" cy="4.50" r="1.30" fill="#cc0f0f" stroke="#8a0a0a" stroke-width="0.4"/><circle cx="0.00" cy="6.00" r="1.30" fill="#cc0f0f" stroke="#8a0a0a" stroke-width="0.4"/></g>
<rect x="610" y="48" width="19.9" height="18.9" fill="none" stroke="#f58220" stroke-width="2.1"/>
</svg>
<div class="abs" style="left:0;top:89px;width:161px;height:11px;background:#e2e2e2"></div>
<div class="t" style="left:3.00px;top:89.90px;font-size:8.00px;line-height:11.00px;color:#222;transform:scaleX(0.9069);transform-origin:0 50%;">Combo View</div>
<svg class="abs" style="left:0;top:0" width="163" height="120" viewBox="0 0 163 120"><path d="M152 93.5H156V97H152ZM153.3 93.5V92.2H157.3V95.6H156" stroke="#333" stroke-width="0.9" fill="none"/></svg>
<div class="abs" style="left:2px;top:104px;width:30px;height:13px;background:#f0f0f0;border:1px solid #e0e0e0;border-bottom:none"></div>
<div class="abs" style="left:31px;top:101.5px;width:44.5px;height:16px;background:#fff;border:1px solid #e4e4e4;border-bottom:none"></div>
<svg class="abs" style="left:0;top:0" width="163" height="120" viewBox="0 0 163 120"><g transform="translate(0.3,1)"><path d="M39.6 104.2l1.6-1.4 7 6.6-1.2 2.6-2.4-.8Z" fill="#1f3f7a"/><path d="M39.6 104.2l1.6-1.4 1.6 1.6-1.6 1.4Z" fill="#b9b9b9"/><path d="M46 111l2 1.6-.6-2.6Z" fill="#223"/></g></svg>
<div class="t" style="left:7.50px;top:105.65px;font-size:7.50px;line-height:10.50px;color:#111;transform:scaleX(0.8567);transform-origin:0 50%;">Model</div>
<div class="t" style="left:50.80px;top:104.65px;font-size:7.50px;line-height:10.50px;color:#111;transform:scaleX(0.8868);transform-origin:0 50%;">Tasks</div>
<div class="abs" style="left:2px;top:117px;width:146.5px;height:272px;background:linear-gradient(#a6a6c6 0px,#34346a 175px,#2f2f60 272px)"></div>
<div class="abs" style="left:148.5px;top:117px;width:11.5px;height:272px;background:#f0f0f0"></div>
<div class="abs" style="left:149.5px;top:128px;width:9px;height:90.5px;background:#cdcdcd"></div>
<svg class="abs" style="left:0;top:0" width="163" height="407" viewBox="0 0 163 407"><path d="M151.3 124.4L154 121.7L156.7 124.4M151.3 381.6L154 384.3L156.7 381.6" stroke="#333" stroke-width="1.1" fill="none"/></svg>
<div class="btn" style="left:53px;top:128px;width:44px;height:12.2px"></div>
<div class="t" style="left:67.50px;top:129.85px;font-size:7.50px;line-height:10.50px;color:#000;transform:scaleX(0.8084);transform-origin:0 50%;">Close</div>
<div class="gh" style="top:151.5px"></div>
<div class="grp" style="top:165.5px;height:77.5px"></div>
<div class="t" style="left:21.00px;top:153.80px;font-size:7.80px;line-height:10.80px;color:#1845b8;transform:scaleX(0.8707);transform-origin:0 50%;font-weight:bold;">Solver messages</div>
<div class="t" style="left:15.00px;top:174.25px;font-size:7.50px;line-height:10.50px;color:#000;transform:scaleX(0.8723);transform-origin:0 50%;">Under-constrained sketch with</div>
<div class="t" style="left:105.00px;top:174.25px;font-size:7.50px;line-height:10.50px;color:#0000e0;transform:scaleX(0.8950);transform-origin:0 50%;text-decoration:underline;background:#f4f6ff;">1 degree</div>
<div class="t" style="left:15.00px;top:182.25px;font-size:7.50px;line-height:10.50px;color:#000;transform:scaleX(0.8831);transform-origin:0 50%;">of freedom.</div>
<div class="t" style="left:15.00px;top:194.45px;font-size:7.50px;line-height:10.50px;color:#109a10;transform:scaleX(0.8651);transform-origin:0 50%;background:#e3e9fb;">Solved in 0 sec</div>
<div class="cb" style="left:15px;top:208px"></div>
<div class="t" style="left:26.00px;top:207.85px;font-size:7.50px;line-height:10.50px;color:#000;transform:scaleX(0.8766);transform-origin:0 50%;">Auto remove redundants</div>
<div class="cb" style="left:15px;top:223.5px"></div>
<div class="t" style="left:26.00px;top:223.45px;font-size:7.50px;line-height:10.50px;color:#000;transform:scaleX(0.8776);transform-origin:0 50%;">Auto update</div>
<div class="btn" style="left:77.5px;top:221.5px;width:57px;height:13px"></div>
<div class="t" style="left:95.50px;top:223.65px;font-size:7.50px;line-height:10.50px;color:#000;transform:scaleX(0.8683);transform-origin:0 50%;">Update</div>
<div class="gh" style="top:248.5px"></div>
<div class="grp" style="top:262.5px;height:130px"></div>
<div class="t" style="left:21.00px;top:251.00px;font-size:7.80px;line-height:10.80px;color:#1845b8;transform:scaleX(0.8811);transform-origin:0 50%;font-weight:bold;">Edit controls</div>
<div class="cb" style="left:15px;top:272.0px"><svg width="8" height="8" viewBox="0 0 8 8" style="left:-1px;top:-1px"><path d="M1.6 4L3.3 5.7L6.5 1.8" stroke="#222" stroke-width="0.9" fill="none"/></svg></div>
<div class="t" style="left:26.00px;top:271.95px;font-size:7.50px;line-height:10.50px;color:#000;transform:scaleX(0.8695);transform-origin:0 50%;">Show grid</div>
<div class="cb" style="left:15px;top:303.0px"><svg width="8" height="8" viewBox="0 0 8 8" style="left:-1px;top:-1px"><path d="M1.6 4L3.3 5.7L6.5 1.8" stroke="#222" stroke-width="0.9" fill="none"/></svg></div>
<div class="t" style="left:26.00px;top:302.95px;font-size:7.50px;line-height:10.50px;color:#000;transform:scaleX(0.8611);transform-origin:0 50%;">Grid snap</div>
<div class="cb" style="left:15px;top:317.7px"><svg width="8" height="8" viewBox="0 0 8 8" style="left:-1px;top:-1px"><path d="M1.6 4L3.3 5.7L6.5 1.8" stroke="#222" stroke-width="0.9" fill="none"/></svg></div>
<div class="t" style="left:26.00px;top:317.65px;font-size:7.50px;line-height:10.50px;color:#000;transform:scaleX(0.8740);transform-origin:0 50%;">Auto constraints</div>
<div class="cb" style="left:15px;top:332.3px"><svg width="8" height="8" viewBox="0 0 8 8" style="left:-1px;top:-1px"><path d="M1.6 4L3.3 5.7L6.5 1.8" stroke="#222" stroke-width="0.9" fill="none"/></svg></div>
<div class="t" style="left:26.00px;top:332.25px;font-size:7.50px;line-height:10.50px;color:#000;transform:scaleX(0.8811);transform-origin:0 50%;">Avoid redundant auto constraints</div>
<div class="t" style="left:15.00px;top:288.15px;font-size:7.50px;line-height:10.50px;color:#000;transform:scaleX(0.8367);transform-origin:0 50%;">Grid size:</div>
<div class="abs" style="left:77px;top:286px;width:58px;height:12.7px;background:#fff;border:0.8px solid #9a9a9a"></div>
<div class="t" style="left:79.50px;top:288.15px;font-size:7.50px;line-height:10.50px;color:#000;transform:scaleX(0.8696);transform-origin:0 50%;">10.00 mm</div>
<div class="abs" style="left:126px;top:287px;width:8px;height:10.7px;background:#e6e6e6;border-left:1px solid #c0c0c0"></div>
<svg class="abs" style="left:0;top:0" width="163" height="407" viewBox="0 0 163 407"><path d="M128.3 291L130 289L131.7 291ZM128.3 294.2L130 296.2L131.7 294.2Z" fill="#222"/></svg>
<div class="t" style="left:15.00px;top:345.25px;font-size:7.50px;line-height:10.50px;color:#000;transform:scaleX(0.8695);transform-origin:0 50%;">Rendering order (global):</div>
<div class="abs" style="left:15px;top:357.3px;width:120px;height:32px;background:#fff;border:0.8px solid #b4b4b4;border-bottom:none"></div>
<div class="t" style="left:18.00px;top:360.15px;font-size:7.50px;line-height:10.50px;color:#000;transform:scaleX(0.9547);transform-origin:0 50%;">Normal Geometry</div>
<div class="t" style="left:18.00px;top:370.85px;font-size:7.50px;line-height:10.50px;color:#000;transform:scaleX(0.9532);transform-origin:0 50%;">Construction Geometry</div>
<div class="t" style="left:18.00px;top:381.65px;font-size:7.50px;line-height:10.50px;color:#000;transform:scaleX(0.9357);transform-origin:0 50%;">External Geometry</div>
<svg class="abs" style="left:0;top:0" width="163" height="407" viewBox="0 0 163 407">
<path d="M11 154.0H18V162.5H11Z" fill="#fbfbf4" stroke="#c9c9c0" stroke-width="0.5"/><path d="M16 153.5H18.5V156.0H16Z" fill="#f2e85a"/>
<circle cx="136" cy="158.5" r="4.1" fill="#fff" stroke="#b8c4ee" stroke-width="0.7"/><path d="M134.3 158.1L136 156.4L137.7 158.1M134.3 160.6L136 158.9L137.7 160.6" stroke="#1845b8" stroke-width="0.9" fill="none"/>
<path d="M11 251.0H18V259.5H11Z" fill="#fbfbf4" stroke="#c9c9c0" stroke-width="0.5"/><path d="M16 250.5H18.5V253.0H16Z" fill="#f2e85a"/>
<circle cx="136" cy="255.5" r="4.1" fill="#fff" stroke="#b8c4ee" stroke-width="0.7"/><path d="M134.3 255.1L136 253.4L137.7 255.1M134.3 257.6L136 255.9L137.7 257.6" stroke="#1845b8" stroke-width="0.9" fill="none"/>
</svg>
<div class="abs" style="left:0;top:388.2px;width:163px;height:19px;background:#f0f0f0"></div>
<div id="view" class="abs"></div>
<svg class="abs" style="left:163px;top:88px;overflow:hidden" width="605" height="288.5" viewBox="163 88 605 288.5" font-family="Liberation Sans, sans-serif">
<path d="M171.5 88V377M214.5 88V377M257.5 88V377M300.5 88V377M343.5 88V377M386.5 88V377M429.5 88V377M472.5 88V377M515.5 88V377M558.5 88V377M644.5 88V377M687.5 88V377M730.5 88V377M163 126.1H768M163 169.2H768M163 212.3H768M163 255.4H768M163 298.5H768M163 341.6H768" stroke="#ccccdc" stroke-opacity="0.6" stroke-width="0.8" stroke-dasharray="1.3 1.9" fill="none"/>
<path d="M163 254.6H768" stroke="#e2685c" stroke-width="0.8" stroke-dasharray="1.6 1.5" fill="none" stroke-opacity="0.85"/>
<path d="M601.0 88V377" stroke="#7fd6a0" stroke-width="0.9" fill="none"/>
<circle cx="287.1" cy="254.7" r="32.3" fill="none" stroke="#7fe0a4" stroke-width="1"/>
<circle cx="601.0" cy="254.9" r="36.6" fill="none" stroke="#7fe0a4" stroke-width="1"/>
<path d="M287.1 297.5H691.2" stroke="#fff" stroke-width="1.7" fill="none"/>
<path d="M287.1 297.5H691.2" stroke="#b9b9cc" stroke-width="1.7" stroke-dasharray="0.6 1.6" fill="none"/>
<path d="M287.1 254.7V333M601.0 254.7V333" stroke="#f03c1e" stroke-width="1" fill="none"/>
<path d="M287.1 325.1H415.8M442.1 325.1H601.0" stroke="#f03c1e" stroke-width="1" fill="none"/>
<path d="M287.1 325.1l4-1.4v2.8ZM601.0 325.1l-4-1.4v2.8Z" fill="#f03c1e"/>
<text x="418.6" y="327.6" font-size="6.8" fill="#b8302a" textLength="21" lengthAdjust="spacingAndGlyphs">73 mm</text>
<path d="M287.4 273.8V297.5M691.5 273.8V297.5" stroke="#12a01c" stroke-width="1" fill="none"/>
<path d="M287.1 282.4H476.5M501.8 282.4H691.2" stroke="#12a01c" stroke-width="1" fill="none"/>
<path d="M287.4 282.4l4-1.4v2.8ZM691.5 282.4l-4-1.4v2.8Z" fill="#12a01c"/>
<text x="478.7" y="284.9" font-size="6.8" fill="#2a8a3c" textLength="21" lengthAdjust="spacingAndGlyphs">94 mm</text>
<path d="M486.8 290.6H490.8" stroke="#f03c1e" stroke-width="0.9"/>
<path d="M262.2 275.2L327.7 221.2" stroke="#f03c1e" stroke-width="0.9" fill="none"/>
<g transform="translate(262.2,275.2) rotate(140.5)"><path d="M0 0l-4.9-1.9v3.8Z" fill="#ff3418"/></g>
<g transform="translate(312.0,234.2) rotate(-39.5)"><path d="M0 0l-4.9-1.9v3.8Z" fill="#ff3418"/></g>
<text transform="translate(339.7,212.7) rotate(-38.5)" x="-13" y="2.4" font-size="7" fill="#b4281c" textLength="26" lengthAdjust="spacingAndGlyphs">ø15 mm</text>
<path d="M572.8 278.2L656.5 209.2" stroke="#f03c1e" stroke-width="0.9" fill="none"/>
<g transform="translate(572.8,278.2) rotate(140.5)"><path d="M0 0l-4.9-1.9v3.8Z" fill="#ff3418"/></g>
<g transform="translate(629.2,231.6) rotate(-39.5)"><path d="M0 0l-4.9-1.9v3.8Z" fill="#ff3418"/></g>
<text transform="translate(669.0,201.4) rotate(-38.5)" x="-13" y="2.4" font-size="7" fill="#b4281c" textLength="26" lengthAdjust="spacingAndGlyphs">ø17 mm</text>
<circle cx="287.1" cy="254.7" r="1.2" fill="#ff5a3c"/>
<circle cx="601.0" cy="254.7" r="1.2" fill="#ff5a3c"/>
<circle cx="287.1" cy="297.5" r="1.3" fill="#f03c1e"/><circle cx="691.2" cy="297.5" r="1.3" fill="#f03c1e"/>
<path d="M272.4 258l3-3M272.4 258v-1.6M272.4 258h1.6M274.5 251v4.4M276.2 252.2l1.2 2 1.2-2" stroke="#d03424" stroke-width="0.9" fill="none"/>
<path d="M274.5 295.2v4.4M273.5 296.6h2M273.5 298.2h2M276.4 296.4l1.1 2 1.1-2" stroke="#d03424" stroke-width="0.9" fill="none"/>
<g>
<path d="M730.8 103.8H748.3L752.8 108.3V126L748.3 130.5H730.8L726.3 126V108.3Z" fill="#bebed6" fill-opacity="0.66"/>
<rect x="729.5" y="106" width="20.6" height="21.8" rx="2" fill="#d4d4e4" fill-opacity="0.68"/>
<path d="M735 96.5L739.6 91L744.2 96.5Z" fill="#b4b4ce" fill-opacity="0.55"/>
<path d="M735 138.8L739.6 144L744.2 138.8Z" fill="#b4b4ce" fill-opacity="0.55"/>
<path d="M718 112.5L713 117L718 121.5Z" fill="#b4b4ce" fill-opacity="0.55"/>
<path d="M761 112.5L766 117L761 121.5Z" fill="#b4b4ce" fill-opacity="0.55"/>
<path d="M732.8 93.2L733.5 97.5Q726.5 99 723.5 103.6L725.3 105.2L719.5 105.5L719.8 99.5L721.5 101.3Q725.5 95.5 732.8 93.2Z" fill="#b4b4ce" fill-opacity="0.55"/>
<path d="M746.4 93.2L745.7 97.5Q752.7 99 755.7 103.6L753.9 105.2L759.7 105.5L759.4 99.5L757.7 101.3Q753.7 95.5 746.4 93.2Z" fill="#b4b4ce" fill-opacity="0.55"/>
<path d="M749.5 136l3.2-1.6 3.2 1.6v3.6l-3.2 1.6-3.2-1.6Z" fill="#a6a6c2" fill-opacity="0.85"/><path d="M749.5 136l3.2 1.6 3.2-1.6M752.7 137.6v3.6" stroke="#8a8aaa" stroke-width="0.5" fill="none"/><path d="M759.3 136.5h3.2l-1.6 1.8Z" fill="#60608a"/>
<path d="M729.6 127.2V106.5" stroke="#35b535" stroke-width="0.7" stroke-opacity="0.6"/><path d="M729.6 127.2H749.5" stroke="#e04040" stroke-width="0.7" stroke-opacity="0.6"/><path d="M729.6 127.2l-2.6 3.4" stroke="#2020e0" stroke-width="0.8"/><path d="M725.6 130.2h1.6l-1.6 1.8h1.6" stroke="#2020e0" stroke-width="0.5" fill="none"/>
<text x="735" y="120" font-size="6.3" font-weight="bold" fill="#000" stroke="#000" stroke-width="0.25" textLength="10.5" lengthAdjust="spacingAndGlyphs">TOP</text>
</g>
<path d="M754.3 362V353.5" stroke="#18a018" stroke-width="1"/><path d="M752.9 354.6L754.3 351.6L755.7 354.6Z" fill="#18a018"/>
<path d="M754.3 362H762" stroke="#c03030" stroke-width="1"/><path d="M761 360.7L764 362L761 363.3Z" fill="#c03030"/>
<rect x="753.3" y="361" width="2" height="2" fill="#2020c0"/>
<text x="755.2" y="351.8" font-size="3.6" fill="#222">Y</text><text x="765" y="362.4" font-size="3.6" fill="#222">X</text><text x="755.8" y="360.6" font-size="3.2" fill="#222">Z</text>
<rect x="420.3" y="290.7" width="35.2" height="12.5" fill="none" stroke="#f58220" stroke-width="1.9"/>
</svg>
<div class="abs" style="left:163px;top:376.5px;width:605px;height:14px;background:#f0f0f0"></div>
<div class="abs" style="left:165px;top:378px;width:67px;height:12.5px;background:#f0f0f0;border:1px solid #dcdcdc;border-bottom:none"></div>
<div class="abs" style="left:231.5px;top:376.5px;width:82px;height:14px;background:#fff;border:1px solid #dcdcdc;border-bottom:none"></div>
<div class="t" style="left:182.50px;top:379.65px;font-size:7.50px;line-height:10.50px;color:#000;transform:scaleX(0.8669);transform-origin:0 50%;">Start page</div>
<div class="t" style="left:251.50px;top:379.65px;font-size:7.50px;line-height:10.50px;color:#000;transform:scaleX(0.9049);transform-origin:0 50%;">Unnamed : 1*</div>
<svg class="abs" style="left:0;top:0" width="768" height="407" viewBox="0 0 768 407">
<g transform="translate(171.00,379.50) scale(0.850)"><path d="M0 0H7V2.4H3V4H5.6V6.2H3V10H0Z" fill="#cb1a1f"/><path d="M0 0H1.3V10H0Z" fill="#8e1014"/><circle cx="7" cy="6.6" r="2.6" fill="#2f5fa8"/><circle cx="7" cy="6.6" r="3.2" fill="none" stroke="#2f5fa8" stroke-width="1.1" stroke-dasharray="1.1 0.9"/><circle cx="7" cy="6.6" r="1.1" fill="#fff"/></g>
<g transform="translate(240.00,379.50) scale(0.850)"><path d="M0 0H7V2.4H3V4H5.6V6.2H3V10H0Z" fill="#cb1a1f"/><path d="M0 0H1.3V10H0Z" fill="#8e1014"/><circle cx="7" cy="6.6" r="2.6" fill="#2f5fa8"/><circle cx="7" cy="6.6" r="3.2" fill="none" stroke="#2f5fa8" stroke-width="1.1" stroke-dasharray="1.1 0.9"/><circle cx="7" cy="6.6" r="1.1" fill="#fff"/></g>
<rect x="216.7" y="380.5" width="7" height="7" fill="#dadada" stroke="#bdbdbd" stroke-width="0.5"/><path d="M218.5 382.3L221.9 385.7M221.9 382.3L218.5 385.7" stroke="#fff" stroke-width="1"/>
<rect x="296.6" y="380" width="7.8" height="7.8" rx="1.2" fill="#e0562c"/><path d="M298.6 382L302.4 385.8M302.4 382L298.6 385.8" stroke="#fff" stroke-width="1.2"/>
<path d="M643.8 392V407M693.6 392V407" stroke="#d0d0d0" stroke-width="0.7"/>
<path d="M653.5 399.5a2.6 2.6 0 0 1 4.6-1.6M658.5 400.5a2.6 2.6 0 0 1-4.6 1.6" stroke="#222" stroke-width="1.3" fill="none"/><circle cx="658.3" cy="397.5" r="1.3" fill="#222"/><circle cx="653.7" cy="402.5" r="1.3" fill="#222"/>
<path d="M685 399.3H688.4L686.7 401.2Z" fill="#222"/>
</svg>
<div class="t" style="left:2.00px;top:395.70px;font-size:7.40px;line-height:10.40px;color:#000;transform:scaleX(0.8856);transform-origin:0 50%;">Preselected: Unnamed.Body.Sketch.Constraint8 (-26.834862 mm,-6.656935 mm,9.000000 µm)</div>
<div class="t" style="left:662.80px;top:395.65px;font-size:7.50px;line-height:10.50px;color:#000;transform:scaleX(0.9108);transform-origin:0 50%;">Gestur</div>
<div class="t" style="left:696.30px;top:395.65px;font-size:7.50px;line-height:10.50px;color:#000;transform:scaleX(0.8885);transform-origin:0 50%;">140.77 mm x 67.03 mm</div>
<div class="abs" style="left:397px;top:143.5px;width:152px;height:101px;background:#f0f0f0;box-shadow:0 2px 7px rgba(0,0,0,0.35),0 0 0 0.6px rgba(90,90,110,0.6)"></div>
<div class="abs" style="left:397px;top:143.5px;width:152px;height:17.5px;background:#fff"></div>
<svg class="abs" style="left:0;top:0" width="768" height="407" viewBox="0 0 768 407">
<g transform="translate(400.80,147.00) scale(0.950)"><path d="M0 0H7V2.4H3V4H5.6V6.2H3V10H0Z" fill="#cb1a1f"/><path d="M0 0H1.3V10H0Z" fill="#8e1014"/><circle cx="7" cy="6.6" r="2.6" fill="#2f5fa8"/><circle cx="7" cy="6.6" r="3.2" fill="none" stroke="#2f5fa8" stroke-width="1.1" stroke-dasharray="1.1 0.9"/><circle cx="7" cy="6.6" r="1.1" fill="#fff"/></g>
<path d="M532.8 149.3L538.2 154.7M538.2 149.3L532.8 154.7" stroke="#555" stroke-width="0.8" fill="none"/>
</svg>
<div class="t" style="left:412.80px;top:147.40px;font-size:8.00px;line-height:11.00px;color:#111;transform:scaleX(0.9085);transform-origin:0 50%;">Insert length</div>
<div class="t" style="left:505.60px;top:147.10px;font-size:8.60px;line-height:11.60px;color:#222;">?</div>
<div class="t" style="left:403.50px;top:169.35px;font-size:7.50px;line-height:10.50px;color:#000;transform:scaleX(0.8992);transform-origin:0 50%;">Length:</div>
<div class="t" style="left:403.50px;top:184.45px;font-size:7.50px;line-height:10.50px;color:#000;transform:scaleX(0.8902);transform-origin:0 50%;">Name (optional)</div>
<div class="abs" style="left:454.4px;top:168px;width:88.2px;height:11.5px;background:#fff;border:0.9px solid #4f98de"></div>
<div class="abs" style="left:456.2px;top:170.2px;width:16.6px;height:7.4px;background:#0078d7"></div>
<div class="t" style="left:456.80px;top:169.45px;font-size:7.50px;line-height:10.50px;color:#fff;transform:scaleX(0.8632);transform-origin:0 50%;">94.00</div>
<div class="t" style="left:475.30px;top:169.45px;font-size:7.50px;line-height:10.50px;color:#000;transform:scaleX(0.8403);transform-origin:0 50%;">mm</div>
<div class="abs" style="left:533.5px;top:169px;width:8px;height:9.5px;background:#e8e8e8;border-left:1px solid #c8c8c8"></div>
<svg class="abs" style="left:0;top:0" width="768" height="407" viewBox="0 0 768 407">
<path d="M535.9 172.6L537.6 170.7L539.3 172.6ZM535.9 175L537.6 176.9L539.3 175Z" fill="#222"/>
<circle cx="527.6" cy="171.8" r="2.9" fill="#7aa0d8" stroke="#3c63a8" stroke-width="0.7"/><path d="M525.8 171.2h3.6M525.8 172.6h3.6" stroke="#e8f0ff" stroke-width="0.6"/>
</svg>
<div class="abs" style="left:454.4px;top:183.6px;width:88.2px;height:11px;background:#fff;border:0.7px solid #858585"></div>
<div class="cb" style="left:403.5px;top:205.5px"></div>
<div class="t" style="left:414.60px;top:205.35px;font-size:7.50px;line-height:10.50px;color:#000;transform:scaleX(0.8525);transform-origin:0 50%;">Reference</div>
<div class="btn" style="left:449.3px;top:225.4px;width:44.5px;height:12.8px;border:1.3px solid #2486dc"></div>
<div class="t" style="left:467.00px;top:227.55px;font-size:7.50px;line-height:10.50px;color:#000;transform:scaleX(0.8305);transform-origin:0 50%;">OK</div>
<div class="btn" style="left:498.7px;top:225.4px;width:44px;height:12.8px"></div>
<div class="t" style="left:510.50px;top:227.55px;font-size:7.50px;line-height:10.50px;color:#000;transform:scaleX(0.8567);transform-origin:0 50%;">Cancel</div>
<svg class="abs" style="left:0;top:0" width="768" height="407" viewBox="0 0 768 407">
<rect x="453.4" y="166.5" width="35.8" height="14.2" fill="none" stroke="#f58220" stroke-width="2.1"/>
<rect x="447" y="222" width="48.5" height="19.5" fill="none" stroke="#f58220" stroke-width="2.1"/>
</svg>
</body></html>
